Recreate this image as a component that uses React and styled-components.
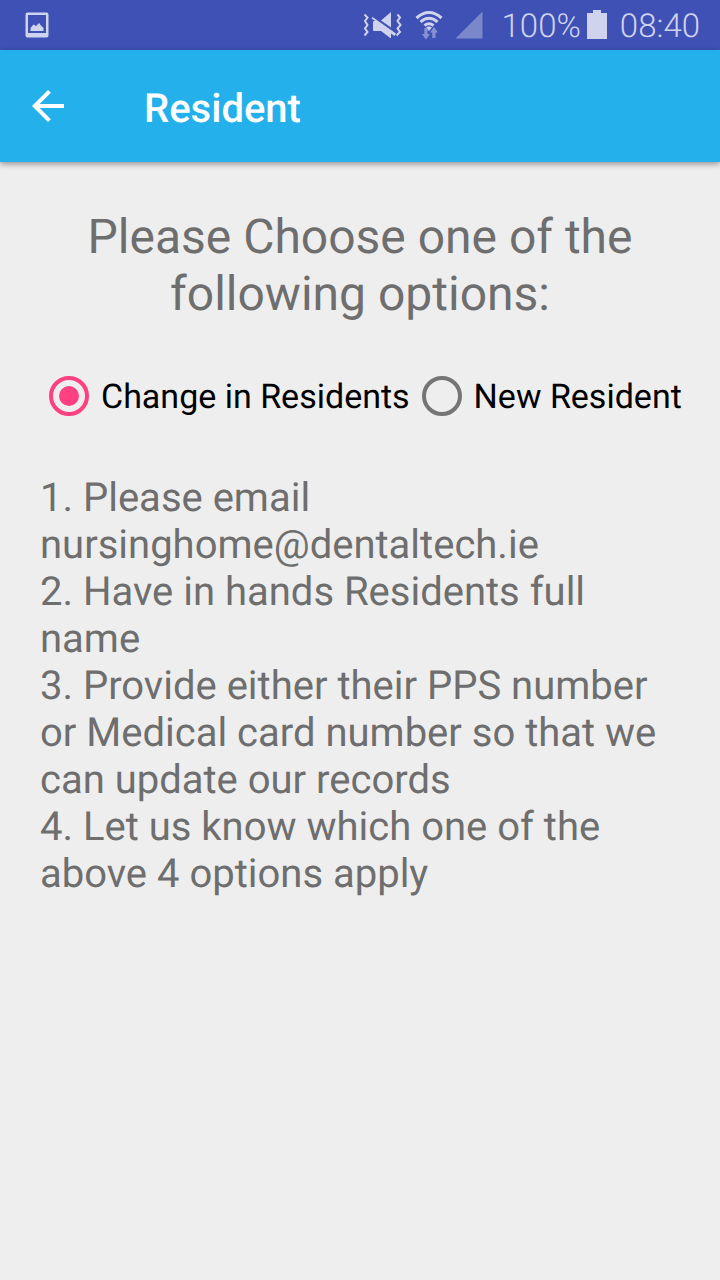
import React, { useState } from "react";
import styled, { createGlobalStyle } from "styled-components";

const GlobalStyle = createGlobalStyle`
  *, *::before, *::after { box-sizing: border-box; }
  body {
    margin: 0;
    background: #eeeeee;
    font-family: Roboto, "Liberation Sans", sans-serif;
    text-rendering: geometricPrecision;
  }
`;

const Screen = styled.div`
  display: flex;
  flex-direction: column;
  min-height: 100vh;
  background: #eeeeee;
`;

const StatusBar = styled.div`
  display: flex;
  align-items: center;
  height: 50px;
  padding: 0 20px 0 24px;
  background: #3f51b5;
  color: #cfd3ed;
`;

const StatusIcons = styled.div`
  display: flex;
  align-items: center;
  gap: 12px;
  margin-left: auto;
  margin-right: 19px;
`;

const StatusText = styled.span`
  font-size: 33px;
  font-weight: 300;
  line-height: 40px;
  padding-top: 4px;
`;

const Battery = styled.svg`
  margin: 0 13px 0 6px;
`;

const AppBar = styled.header`
  position: relative;
  display: flex;
  align-items: center;
  gap: 72px;
  height: 112px;
  padding: 0 24px;
  background: #24b1eb;
  color: #ffffff;
  box-shadow: 0 2px 6px rgba(0, 0, 0, 0.4);
`;

const BackButton = styled.button`
  display: flex;
  padding: 0;
  border: 0;
  background: none;
  color: inherit;
  cursor: pointer;
`;

const Title = styled.h1`
  margin: 0;
  padding-top: 4px;
  font-size: 40px;
  font-weight: 500;
  line-height: 47px;
`;

const Content = styled.main`
  display: flex;
  flex-direction: column;
  padding: 46px 40px;
`;

const Prompt = styled.h2`
  margin: 0;
  font-size: 48px;
  font-weight: 400;
  line-height: 57px;
  text-align: center;
  color: #6e6e6e;
`;

const Options = styled.div`
  display: flex;
  gap: 12px;
  margin: 42px -8px 46px 9px;
`;

const Option = styled.label`
  display: flex;
  align-items: center;
  gap: 12px;
  height: 64px;
  font-size: 34px;
  line-height: 40px;
  white-space: nowrap;
  color: #000000;
  cursor: pointer;
`;

const OptionText = styled.span`
  padding-top: 2px;
`;

const Radio = styled.input`
  appearance: none;
  display: grid;
  place-items: center;
  flex: none;
  width: 40px;
  height: 40px;
  margin: 0;
  border: 4px solid #757575;
  border-radius: 50%;

  &:checked {
    border-color: #ff4081;
  }

  &:checked::before {
    content: "";
    width: 20px;
    height: 20px;
    border-radius: 50%;
    background: #ff4081;
  }
`;

const Steps = styled.ol`
  margin: 0;
  padding: 0;
  list-style: none;
  font-size: 40px;
  line-height: 47px;
  color: #6e6e6e;
`;

const choices = ["Change in Residents", "New Resident"];

const steps = [
  "1. Please email nursinghome@dentaltech.ie",
  "2. Have in hands Residents full name",
  "3. Provide either their PPS number or Medical card number so that we can update our records",
  "4. Let us know which one of the above 4 options apply",
];

function PictureIcon() {
  return (
    <svg width="26" height="28" viewBox="0 0 26 28" fill="currentColor" aria-hidden="true">
      <path
        fillRule="evenodd"
        d="M3.500 1.500H22.500Q24.500 1.500 24.500 3.500V24.500Q24.500 26.500 22.500 26.500H3.500Q1.500 26.500 1.500 24.500V3.500Q1.500 1.500 3.500 1.500ZM4 4V22H22V4Z"
      />
      <path d="M6.500 20V17L9.500 13.500L12 15L15 12L17 14.500L19.500 17V20Z" />
    </svg>
  );
}

function MuteVibrateIcon() {
  return (
    <svg width="40" height="30" viewBox="0 0 40 30" fill="currentColor" aria-hidden="true">
      <path
        d="M1.500 4.500L4.500 7.500L2 11L4.500 15L2 18.500L4.500 22L1.500 25.500M34.500 4.500L37 7.500L34.500 11L37.500 15L34.500 18.500L37 22L33.500 25.500"
        fill="none"
        stroke="currentColor"
        strokeWidth="2"
      />
      <path d="M18 10.500L28 2V17.500Z" />
      <path d="M9.500 7L33 23.500L31.500 26L28 23.500V28.500L18 21H11Q10 21 10 20V11.500L12 10.800L8.500 8.500Z" />
    </svg>
  );
}

function WifiIcon() {
  return (
    <svg width="28" height="30" viewBox="0 0 28 30" aria-hidden="true">
      <g fill="none" stroke="currentColor" strokeWidth="3">
        <path d="M1.500 8Q14 -3 26.500 8" />
        <path d="M5.500 12Q14 4.500 22.500 12" />
        <path d="M9.500 15.500Q14 12 18.500 15.500" />
      </g>
      <path d="M11 17.500Q14 15.500 17 17.500L14 21Z" fill="currentColor" />
      <g fill="#8791d0">
        <path d="M9.300 18H12.500V24H15L11 29.500L7 24H9.300Z" />
        <path d="M17.300 28H20.500V22.500H23L19 17L15 22.500H17.300Z" />
      </g>
    </svg>
  );
}

function SignalIcon() {
  return (
    <svg width="28" height="28" viewBox="0 0 28 28" aria-hidden="true">
      <path d="M0.500 27.500L27.500 0.500V27.500Z" fill="#7b87cb" />
    </svg>
  );
}

export default function App() {
  const [selected, setSelected] = useState(choices[0]);
  return (
    <Screen>
      <GlobalStyle />
      <StatusBar>
        <PictureIcon />
        <StatusIcons>
          <MuteVibrateIcon />
          <WifiIcon />
          <SignalIcon />
        </StatusIcons>
        <StatusText>100%</StatusText>
        <Battery width="20" height="30" viewBox="0 0 20 30" aria-hidden="true">
          <path d="M6 0H14V3H20V29H0V3H6Z" fill="currentColor" />
        </Battery>
        <StatusText>08:40</StatusText>
      </StatusBar>
      <AppBar>
        <BackButton type="button" aria-label="Back">
          <svg width="48" height="48" viewBox="0 0 24 24" fill="currentColor" aria-hidden="true">
            <path d="M20 11H7.830l5.590-5.590L12 4l-8 8 8 8 1.410-1.410L7.830 13H20v-2z" />
          </svg>
        </BackButton>
        <Title>Resident</Title>
      </AppBar>
      <Content>
        <Prompt>Please Choose one of the following options:</Prompt>
        <Options role="radiogroup" aria-label="Resident options">
          {choices.map((choice) => (
            <Option key={choice}>
              <Radio
                type="radio"
                name="resident"
                checked={selected === choice}
                onChange={() => setSelected(choice)}
              />
              <OptionText>{choice}</OptionText>
            </Option>
          ))}
        </Options>
        <Steps>
          {steps.map((step) => (
            <li key={step}>{step}</li>
          ))}
        </Steps>
      </Content>
    </Screen>
  );
}
